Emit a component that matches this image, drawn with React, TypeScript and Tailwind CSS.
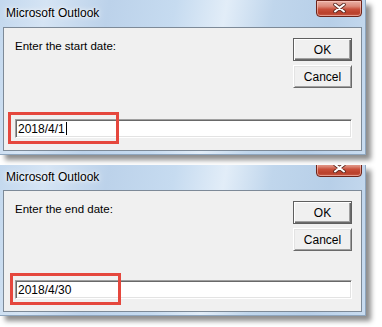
import React from "react";

const font = { fontFamily: '"Liberation Sans", Arial, sans-serif' };

function CloseButton({ offset }: { offset: string }) {
  return (
    <div
      className={`${offset} w-[46px] h-[17px] shrink-0 rounded-b-[4px] border border-[#6e2419] bg-[linear-gradient(180deg,#eab0a4_0%,#dc8a7a_35%,#c9503b_55%,#b9402b_80%,#c85a45_100%)] shadow-[inset_0_0_0_1px_rgba(255,210,200,0.55)] flex items-end justify-center pb-[3px]`}
    >
      <svg width="13" height="10" viewBox="0 0 13 10">
        <path d="M2 1.5 L11 8.5 M11 1.5 L2 8.5" stroke="#5a2a22" strokeWidth="3.6" strokeLinecap="round" />
        <path d="M2 1.5 L11 8.5 M11 1.5 L2 8.5" stroke="#ffffff" strokeWidth="2" strokeLinecap="round" />
      </svg>
    </div>
  );
}

function Dialog({
  label,
  value,
  cursor,
  titleH,
  titlePad,
  closeOffset,
  clientH,
  redLeft,
}: {
  label: string;
  value: string;
  cursor: boolean;
  titleH: string;
  titlePad: string;
  closeOffset: string;
  clientH: string;
  redLeft: string;
}) {
  return (
    <div className="w-[366px] shadow-[5px_5px_5px_rgba(0,0,0,0.45)] overflow-hidden border-r border-b border-[#8ea6bf] bg-[linear-gradient(100deg,#c3d8ee_0%,#d5e4f4_12%,#bcd2ea_28%,#c6dbf0_45%,#e2edf8_58%,#c0d6ec_70%,#b7cfe8_85%,#c9dcf0_100%)] pl-[3px] pr-[3px] pb-[3px]">
      <div className={`${titleH} flex items-start justify-between`}>
        <div
          className={`${titlePad} pl-[3px] text-[12px] leading-[14px] text-black [text-shadow:0_0_6px_rgba(255,255,255,0.95),0_0_3px_rgba(255,255,255,0.9)]`}
          style={font}
        >
          Microsoft Outlook
        </div>
        <CloseButton offset={closeOffset} />
      </div>
      <div
        className={`${clientH} border border-[#7d8a98] bg-[#f0f0f0] flex flex-col pl-[11px] pr-[9px]`}
        style={font}
      >
        <div className="flex justify-between">
          <div className="mt-[11px] text-[11.5px] leading-[14px] text-black">{label}</div>
          <div className="mt-[10px] flex flex-col gap-[4px]">
            <button className="w-[59px] h-[23px] border border-[#5f5f5f] bg-[#f0f0f0] shadow-[inset_1px_1px_0_#ffffff,inset_-1px_-1px_0_#6a6a6a,inset_-2px_-2px_0_#a0a0a0] text-[12px] leading-[14px] text-black">
              OK
            </button>
            <button className="w-[59px] h-[23px] border border-t-[#ffffff] border-l-[#ffffff] border-r-[#6a6a6a] border-b-[#6a6a6a] bg-[#f0f0f0] shadow-[inset_1px_1px_0_#e3e3e3,inset_-1px_-1px_0_#a0a0a0] text-[12px] leading-[14px] text-black">
              Cancel
            </button>
          </div>
        </div>
        <div className="mt-auto mb-[12px] relative h-[19px]">
          <div className="h-full border border-t-[#a0a0a0] border-l-[#a0a0a0] border-r-[#ffffff] border-b-[#ffffff] shadow-[inset_1px_1px_0_#696969,inset_-1px_-1px_0_#e3e3e3] bg-white flex items-center pl-[2px] text-[12px] leading-[14px] text-black">
            <span>{value}</span>
            {cursor && <span className="ml-[1px] w-px h-[13px] bg-black" />}
          </div>
          <div className={`absolute ${redLeft} -top-[7px] w-[111px] h-[32px] border-[3px] border-[#e5473d]`} />
        </div>
      </div>
    </div>
  );
}

export default function App() {
  return (
    <div className="w-[382px] h-[327px] bg-white overflow-hidden flex flex-col">
      <Dialog
        label="Enter the start date:"
        value="2018/4/1"
        cursor={true}
        titleH="h-[27px]"
        titlePad="pt-[6px]"
        closeOffset="mt-0"
        clientH="h-[124px]"
        redLeft="-left-[7px]"
      />
      <div className="mt-[10px]">
        <Dialog
          label="Enter the end date:"
          value="2018/4/30"
          cursor={false}
          titleH="h-[25px]"
          titlePad="pt-[5px]"
          closeOffset="-mt-[5px]"
          clientH="h-[122px]"
          redLeft="-left-[5px]"
        />
      </div>
    </div>
  );
}
